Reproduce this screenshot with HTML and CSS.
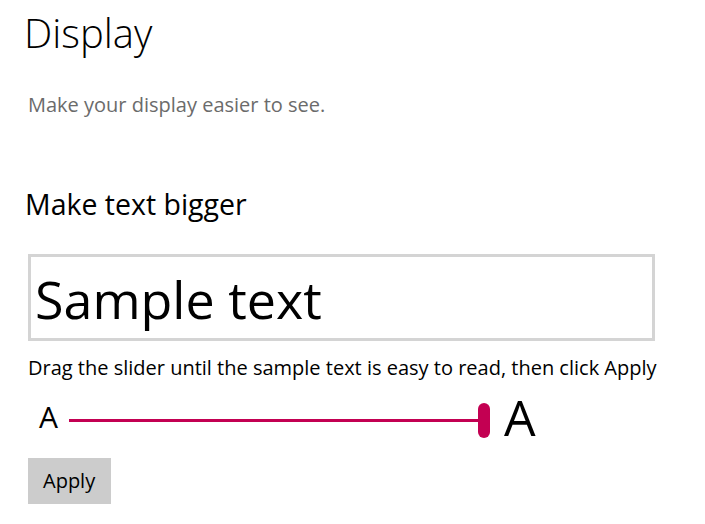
FILE: index.html
```html
<!DOCTYPE html>
<html lang="en">
<head>
    <meta charset="UTF-8">
    <meta name="viewport" content="width=device-width, initial-scale=1.0">
    <title>Display</title>
    <link rel="stylesheet" href="styles.css">
</head>
<body>
    <div class="page">
        <h1 class="title">Display</h1>
        <p class="subtitle">Make your display easier to see.</p>

        <h2 class="section">Make text bigger</h2>
        <div class="sample">Sample text</div>
        <p class="hint">Drag the slider until the sample text is easy to read, then click Apply</p>

        <div class="slider-row">
            <span class="a-small">A</span>
            <div class="slider">
                <div class="track"></div>
                <div class="thumb"></div>
            </div>
            <span class="a-big">A</span>
        </div>

        <button class="apply">Apply</button>
    </div>
</body>
</html>
```

FILE: styles.css
```css
body {
    margin: 0;
    background: #ffffff;
    font-family: "Open Sans", "Noto Sans", sans-serif;
    color: #000000;
}
.page {
    padding: 8px 0 0 25px;
    width: 630px;
}
.title {
    margin: 0 0 0 -1px;
    font-size: 40px;
    font-weight: 300;
    line-height: 50px;
}
.subtitle {
    margin: 33px 0 0 3px;
    font-size: 20px;
    line-height: 28px;
    color: #6b6b6b;
}
.section {
    margin: 67px 0 0 0;
    font-size: 28.5px;
    font-weight: 400;
    line-height: 36px;
}
.sample {
    margin: 32px 0 0 3px;
    border: 3px solid #d4d4d4;
    height: 79px;
    padding: 2px 0 0 4px;
    font-size: 52px;
    line-height: 79px;
    width: 617px;
}
.hint {
    margin: 13px 0 0 3px;
    font-size: 20px;
    line-height: 28px;
    white-space: nowrap;
}
.slider-row {
    display: flex;
    align-items: center;
    height: 40px;
    margin-top: 18px;
}
.a-small {
    font-size: 30px;
    line-height: 40px;
    margin: -6px 0 0 14px;
}
.slider {
    position: relative;
    width: 421px;
    height: 35px;
    margin-left: 11px;
}
.track {
    position: absolute;
    left: 0;
    right: 8px;
    top: 16px;
    height: 3px;
    background: #c30052;
}
.thumb {
    position: absolute;
    right: 0;
    top: 0;
    width: 12px;
    height: 35px;
    border-radius: 6px;
    background: #c30052;
}
.a-big {
    font-size: 50px;
    line-height: 40px;
    margin: -6px 0 0 14px;
}
.apply {
    display: block;
    margin: 18px 0 0 3px;
    height: 46px;
    padding: 0 16px 0 15px;
    border: none;
    background: #cccccc;
    font-family: inherit;
    font-size: 20px;
    line-height: 46px;
    color: #000000;
}
```
